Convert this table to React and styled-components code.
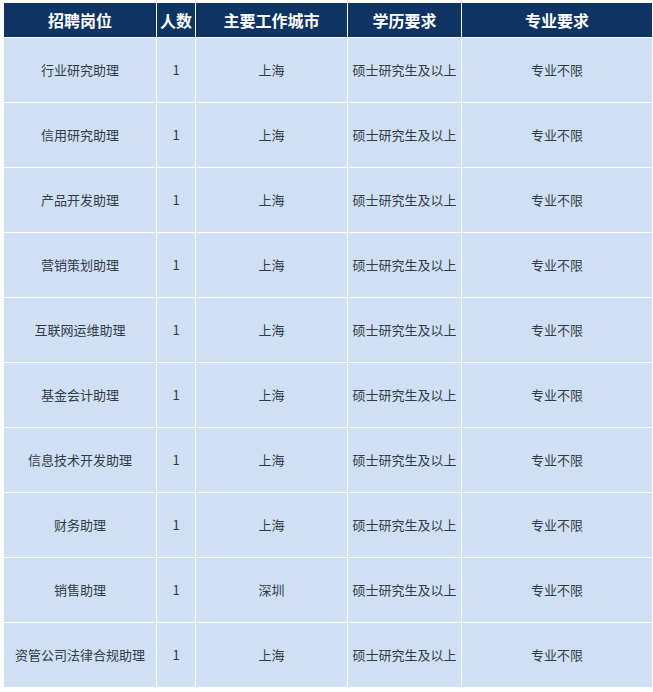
import React from "react";
import styled, { createGlobalStyle } from "styled-components";

const GlobalStyle = createGlobalStyle`
  html, body {
    margin: 0;
    padding: 0;
    background: #fff;
    overflow: hidden;
  }
`;

const Wrap = styled.div`
  width: 653px;
  height: 692px;
  overflow: hidden;
  padding: 2px 0 0 3px;
  box-sizing: border-box;
`;

const Table = styled.table`
  border-collapse: separate;
  border-spacing: 1px;
  table-layout: fixed;
  width: 760px;
  font-family: "Microsoft YaHei", "Noto Sans CJK SC", "Noto Sans", sans-serif;
`;

const Th = styled.th`
  width: ${(p) => p.w}px;
  height: 33px;
  padding: 0 0 1px;
  background: #0d3463;
  color: #fff;
  font-size: 16px;
  font-weight: 700;
  text-align: center;
  vertical-align: middle;
  white-space: nowrap;
`;

const Td = styled.td`
  height: 62px;
  padding: 0 0 2px;
  background: #cfe0f5;
  color: #333b48;
  font-size: 13px;
  text-align: center;
  vertical-align: middle;
  white-space: nowrap;
`;

const columns = [
  { title: "招聘岗位", w: 152 },
  { title: "人数", w: 38 },
  { title: "主要工作城市", w: 151 },
  { title: "学历要求", w: 113 },
  { title: "专业要求", w: 190 },
  { title: "", w: 110 },
];

const jobs = [
  ["行业研究助理", "上海"],
  ["信用研究助理", "上海"],
  ["产品开发助理", "上海"],
  ["营销策划助理", "上海"],
  ["互联网运维助理", "上海"],
  ["基金会计助理", "上海"],
  ["信息技术开发助理", "上海"],
  ["财务助理", "上海"],
  ["销售助理", "深圳"],
  ["资管公司法律合规助理", "上海"],
];

export default function App() {
  return (
    <>
      <GlobalStyle />
      <Wrap>
        <Table>
          <thead>
            <tr>
              {columns.map((c, i) => (
                <Th key={i} w={c.w}>
                  {c.title}
                </Th>
              ))}
            </tr>
          </thead>
          <tbody>
            {jobs.map(([name, city]) => (
              <tr key={name}>
                <Td>{name}</Td>
                <Td>1</Td>
                <Td>{city}</Td>
                <Td>硕士研究生及以上</Td>
                <Td>专业不限</Td>
                <Td></Td>
              </tr>
            ))}
          </tbody>
        </Table>
      </Wrap>
    </>
  );
}
